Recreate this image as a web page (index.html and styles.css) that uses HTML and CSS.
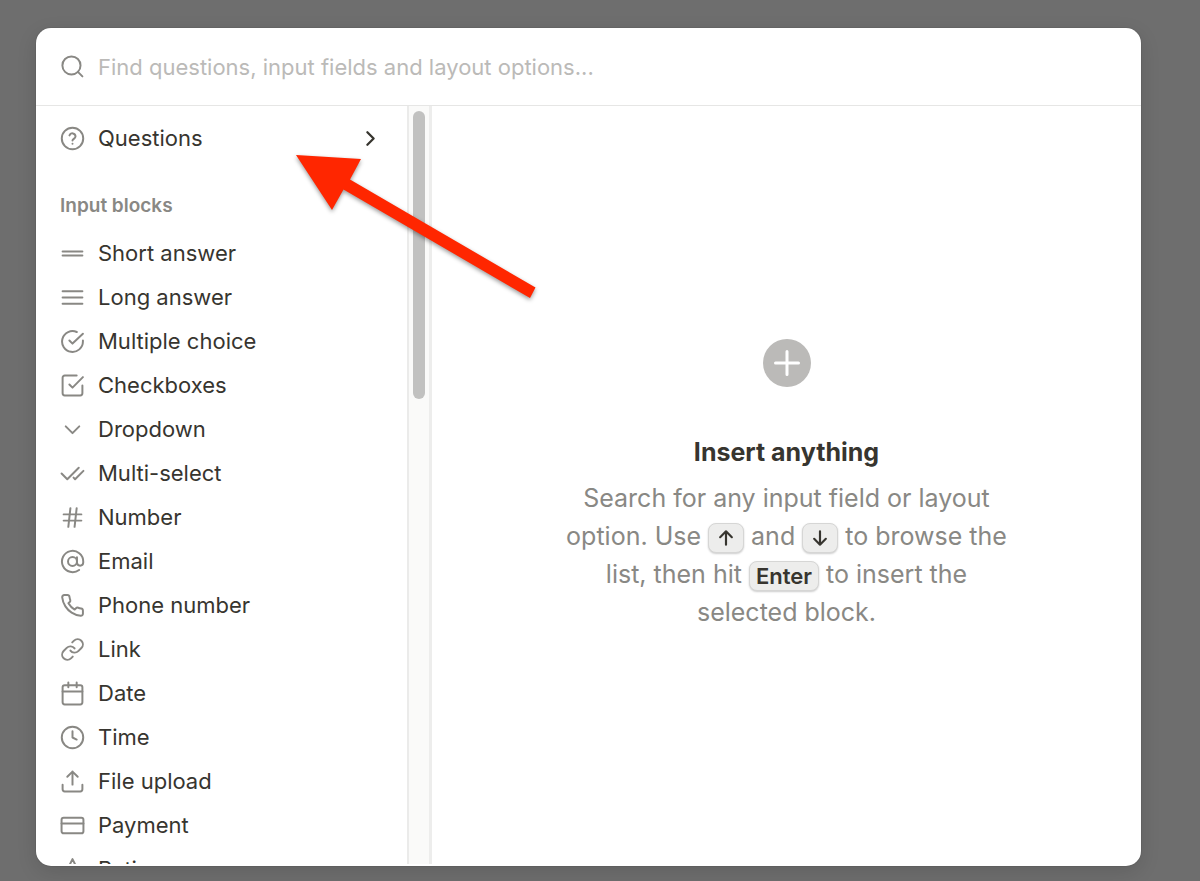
FILE: index.html
```
<!DOCTYPE html>
<html lang="en">
<head>
  <meta charset="UTF-8" />
  <meta name="viewport" content="width=device-width, initial-scale=1.0"/>
  <title>Insert block</title>
  <link rel="stylesheet" href="styles.css">
</head>
<body>

  <main class="modal">
    <div class="search">
      <svg class="icon" viewBox="0 0 24 24"><circle cx="11" cy="11" r="8.7"/><path d="M21.5 21.5l-4.3-4.3"/></svg>
      <input type="text" class="search-input" aria-label="Find blocks" placeholder="Find questions, input fields and layout options...">
    </div>

    <div class="panes">
      <nav class="sidebar">
        <button class="item">
          <svg class="icon" viewBox="0 0 24 24"><circle cx="12" cy="12" r="10.3"/><path d="M9.1 9a3 3 0 0 1 5.8 1c0 2-2.9 2.6-2.9 4M12 17v.1"/></svg>
          <span>Questions</span>
          <svg class="icon chevron" viewBox="0 0 24 24"><path d="M9 18l6-6-6-6"/></svg>
        </button>

        <h2 class="group-title">Input blocks</h2>

        <button class="item">
          <svg class="icon" viewBox="0 0 24 24"><path d="M2.5 10h19M2.5 14h19"/></svg>
          <span>Short answer</span>
        </button>
        <button class="item">
          <svg class="icon" viewBox="0 0 24 24"><path d="M2.5 6h19M2.5 12h19M2.5 18h19"/></svg>
          <span>Long answer</span>
        </button>
        <button class="item">
          <svg class="icon" viewBox="0 0 24 24"><path d="M22 11.1V12a10 10 0 1 1-5.9-9.1"/><path d="M22 4.5l-10 9.5-3-3"/></svg>
          <span>Multiple choice</span>
        </button>
        <button class="item">
          <svg class="icon" viewBox="0 0 24 24"><path d="M21.5 12v7.5a2 2 0 0 1-2 2h-15a2 2 0 0 1-2-2v-15a2 2 0 0 1 2-2H16"/><path d="M22 4l-10 10-3-3"/></svg>
          <span>Checkboxes</span>
        </button>
        <button class="item">
          <svg class="icon" viewBox="0 0 24 24"><path d="M5.5 9l6.5 6.5L18.5 9"/></svg>
          <span>Dropdown</span>
        </button>
        <button class="item">
          <svg class="icon" viewBox="0 0 24 24"><path d="M1.5 12l5.500 5.500L18 6.500"/><path d="M22.500 9.500l-8 8-1.500-1.500"/></svg>
          <span>Multi-select</span>
        </button>
        <button class="item">
          <svg class="icon" viewBox="0 0 24 24"><path d="M3.500 9h17M3.500 15h17M10 3L8 21M16 3l-2 18"/></svg>
          <span>Number</span>
        </button>
        <button class="item">
          <svg class="icon" viewBox="0 0 24 24"><circle cx="12" cy="12" r="4.300"/><path d="M16.300 8v5a3 3 0 0 0 6 0v-1a10.200 10.200 0 1 0-4 8.100"/></svg>
          <span>Email</span>
        </button>
        <button class="item">
          <svg class="icon" viewBox="0 0 24 24"><path d="M22 16.920v3a2 2 0 0 1-2.180 2 19.790 19.790 0 0 1-8.630-3.070 19.500 19.500 0 0 1-6-6 19.790 19.790 0 0 1-3.070-8.670A2 2 0 0 1 4.110 2h3a2 2 0 0 1 2 1.720 12.840 12.840 0 0 0 .7 2.810 2 2 0 0 1-.45 2.110L8.090 9.910a16 16 0 0 0 6 6l1.270-1.270a2 2 0 0 1 2.110-.45 12.840 12.840 0 0 0 2.810.7A2 2 0 0 1 22 16.920z"/></svg>
          <span>Phone number</span>
        </button>
        <button class="item">
          <svg class="icon" viewBox="0 0 24 24"><path d="M10 13a5 5 0 0 0 7.540.54l3-3a5 5 0 0 0-7.070-7.070l-1.720 1.710"/><path d="M14 11a5 5 0 0 0-7.540-.54l-3 3a5 5 0 0 0 7.070 7.070l1.710-1.710"/></svg>
          <span>Link</span>
        </button>
        <button class="item">
          <svg class="icon" viewBox="0 0 24 24"><rect x="2.500" y="4" width="19" height="18.500" rx="2"/><path d="M8 1.500V6M16 1.500V6M2.500 10h19"/></svg>
          <span>Date</span>
        </button>
        <button class="item">
          <svg class="icon" viewBox="0 0 24 24"><circle cx="12" cy="12" r="10.3"/><path d="M12 6v6l4 2"/></svg>
          <span>Time</span>
        </button>
        <button class="item">
          <svg class="icon" viewBox="0 0 24 24"><path d="M21.500 15v4.500a2 2 0 0 1-2 2h-15a2 2 0 0 1-2-2V15"/><path d="M17 7.500l-5-5-5 5M12 2.500V15"/></svg>
          <span>File upload</span>
        </button>
        <button class="item">
          <svg class="icon" viewBox="0 0 24 24"><rect x="1.500" y="4.500" width="21" height="15" rx="2"/><path d="M1.500 10h21"/></svg>
          <span>Payment</span>
        </button>
        <button class="item">
          <svg class="icon" viewBox="0 0 24 24"><path d="M12 2l3.090 6.260L22 9.270l-5 4.870 1.180 6.880L12 17.770l-6.180 3.250L7 14.140 2 9.270l6.910-1.010L12 2z"/></svg>
          <span>Rating</span>
        </button>
      </nav>

      <div class="scrollbar"><div class="thumb"></div></div>

      <section class="intro">
        <svg class="plus" viewBox="0 0 48 48"><circle cx="24" cy="24" r="24"/><path d="M24 12.500v23M12.500 24h23"/></svg>
        <h1>Insert anything</h1>
        <p>
          Search for any input field or layout option. Use
          <kbd><svg class="key" viewBox="0 0 24 24" role="img" aria-label="Up"><path d="M12 20V4M5 11l7-7 7 7"/></svg></kbd>
          and
          <kbd><svg class="key" viewBox="0 0 24 24" role="img" aria-label="Down"><path d="M12 4v16M5 13l7 7 7-7"/></svg></kbd>
          to browse the list, then hit <kbd>Enter</kbd> to insert the selected block.
        </p>
      </section>
    </div>
  </main>

  <svg class="arrow" viewBox="0 0 240 144"><path d="M0 0l65 4-11 20.500 185.500 108-5.500 10.500L47.500 34.500 36 55z"/></svg>

</body>
</html>
```
FILE: styles.css
```
* {
  box-sizing: border-box;
}

body {
  margin: 0;
  height: 100vh;
  padding: 28px 59px 15px 36px;
  background-color: #6e6e6e;
  font-family: 'Inter', sans-serif;
  color: #37352f;
  overflow: hidden;
}

.modal {
  display: flex;
  flex-direction: column;
  height: 100%;
  padding-bottom: 2px;
  background-color: #fff;
  border-radius: 15px;
  overflow: hidden;
  box-shadow: 0 0 0 1px rgba(0,0,0,0.05), 0 6px 20px rgba(0,0,0,0.12);
}

.icon {
  flex: none;
  width: 25px;
  height: 25px;
  fill: none;
  stroke: #898884;
  stroke-width: 1.9;
  stroke-linecap: round;
  stroke-linejoin: round;
}

.search {
  flex: none;
  display: flex;
  align-items: center;
  gap: 13px;
  height: 78px;
  padding: 0 24px;
  border-bottom: 1px solid #e6e6e5;
}

.search-input {
  flex: 1;
  min-width: 0;
  padding: 0;
  border: 0;
  outline: 0;
  background: none;
  font: inherit;
  font-size: 22px;
  color: inherit;
}

.search-input::placeholder {
  color: #bbbab8;
}

.panes {
  flex: 1;
  min-height: 0;
  display: flex;
}

.sidebar {
  width: 371px;
  flex: none;
  padding-top: 10px;
  overflow: hidden;
}

.item {
  display: flex;
  align-items: center;
  gap: 13px;
  width: 100%;
  height: 44px;
  padding: 0 24px;
  border: 0;
  background: none;
  font: inherit;
  font-size: 22px;
  color: inherit;
  cursor: pointer;
}

.item:hover {
  background-color: #f7f7f6;
}

.chevron {
  margin-left: auto;
  stroke: #37352f;
  stroke-width: 2.2;
}

.group-title {
  margin: 0;
  padding: 32px 24px 11px;
  font-size: 19px;
  line-height: 28px;
  font-weight: 600;
  color: #898884;
}

.scrollbar {
  flex: none;
  width: 25px;
  padding: 5px 0;
  background-color: #fafaf9;
  border-left: 2px solid #ebebea;
  border-right: 3px solid #ededec;
}

.thumb {
  width: 12px;
  height: 288px;
  margin: 0 auto;
  border-radius: 6px;
  background-color: #c1c1c0;
}

.intro {
  flex: 1;
  display: flex;
  flex-direction: column;
  align-items: center;
  justify-content: center;
  text-align: center;
}

.plus {
  width: 48px;
  height: 48px;
  fill: #bbbab8;
}

.plus path {
  stroke: #fff;
  stroke-width: 3;
  stroke-linecap: round;
}

.intro h1 {
  margin: 48px 0 10px;
  font-size: 25px;
  line-height: 34px;
  font-weight: 700;
}

.intro p {
  max-width: 450px;
  margin: 0;
  font-size: 25px;
  line-height: 38px;
  color: #898884;
}

kbd {
  display: inline-flex;
  align-items: center;
  justify-content: center;
  min-width: 36px;
  height: 30px;
  padding: 0 6px;
  vertical-align: middle;
  border: 1px solid #d6d6d5;
  border-radius: 8px;
  background-color: #ededec;
  box-shadow: 0 1px 2px rgba(0,0,0,0.2);
  font: inherit;
  font-size: 22px;
  line-height: 28px;
  font-weight: 600;
  color: #37352f;
}

.key {
  width: 20px;
  height: 20px;
  fill: none;
  stroke: #37352f;
  stroke-width: 2.6;
  stroke-linecap: round;
  stroke-linejoin: round;
}

/* pointer laid over the dialog */
.arrow {
  position: absolute;
  top: 155px;
  left: 296px;
  width: 240px;
  height: 144px;
  overflow: visible;
  fill: #ff2600;
  filter: drop-shadow(0 2px 2px rgba(0,0,0,0.4));
  pointer-events: none;
}
```
